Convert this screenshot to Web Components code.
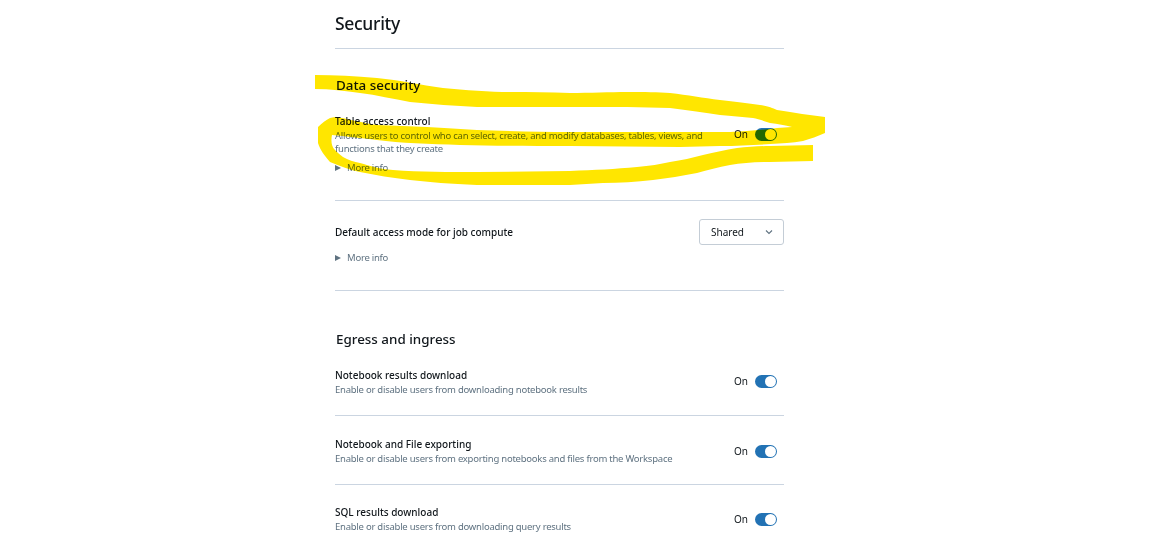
<!DOCTYPE html>
<html>
<head>
<meta charset="utf-8">
<title>Security</title>
<style>
    html, body { margin: 0; background: #fff; height: 537px; overflow: hidden; }
    body { font-family: "Noto Sans", "Liberation Sans", sans-serif; color: #1f2a37; }
</style>
</head>
<body>
<settings-page>
    <setting-section title="Data security" style="--top: 27px">
        <setting-row name="Table access control" style="--pad-top: 20px; --pad-bottom: 25px; --control-top: 13px; --more-top: 6px">
            <span slot="desc">Allows users to control who can select, create, and modify databases, tables, views, and functions that they create</span>
            <more-info slot="more"></more-info>
            <on-toggle slot="control"></on-toggle>
        </setting-row>
        <setting-row name="Default access mode for job compute" style="--pad-top: 24px; --pad-bottom: 25px; --control-top: -6px">
            <more-info slot="more"></more-info>
            <select-box slot="control" value="Shared"></select-box>
        </setting-row>
    </setting-section>
    <setting-section title="Egress and ingress" style="--top: 39px">
        <setting-row name="Notebook results download" plain style="--pad-top: 20px; --pad-bottom: 19px; --control-top: 6px">
            <span slot="desc">Enable or disable users from downloading notebook results</span>
            <on-toggle slot="control"></on-toggle>
        </setting-row>
        <setting-row name="Notebook and File exporting" plain style="--pad-top: 21px; --pad-bottom: 19px; --control-top: 7px">
            <span slot="desc">Enable or disable users from exporting notebooks and files from the Workspace</span>
            <on-toggle slot="control"></on-toggle>
        </setting-row>
        <setting-row name="SQL results download" plain style="--pad-top: 20px; --pad-bottom: 19px; --control-top: 7px">
            <span slot="desc">Enable or disable users from downloading query results</span>
            <on-toggle slot="control"></on-toggle>
        </setting-row>
    </setting-section>
</settings-page>

<script>
class SettingsPage extends HTMLElement {
    constructor() {
        super();
        this.attachShadow({ mode: 'open' });
        this.shadowRoot.innerHTML = `
            <style>
                :host { display: block; position: relative; height: 537px; overflow: hidden; background: #fff; }
                main { width: 449px; margin-left: 335px; }
                h1 {
                    margin: 0;
                    height: 48px;
                    line-height: 46px;
                    font-size: 17.5px;
                    letter-spacing: -0.3px;
                    font-weight: 500;
                    color: #11171c;
                    border-bottom: 1px solid #cbd5e1;
                }
                svg { position: absolute; left: 0; top: 0; mix-blend-mode: multiply; pointer-events: none; }
            </style>
            <main>
                <h1>Security</h1>
                <slot></slot>
            </main>
            <svg width="1160" height="537" viewBox="0 0 1160 537">
                <path fill="#ffe600" d="M315 75 C335 75 355 76 377 78 C400 80 420 85 443 88 C465 90 490 92 510 92 C530 92 550 92 570 93 C590 93 610 92 627 92 C645 92 658 92 670 93 C688 95 703 98 720 100 C735 102 748 103 760 105 C768 106 772 108 777 110 C795 113 810 115 825 117 L825 133 C818 136 810 139 803 141 C792 143 782 143 770 144 C755 145 738 146 720 146 L680 147 L570 146 C530 146 495 146 460 145 C430 144 400 143 377 140 C360 138 345 136 332 135 C331 140 331 146 335 150 C337 152 340 155 343 157 C348 160 354 162 360 163 C370 166 380 169 393 170 C420 172 450 172 477 172 L570 171 C595 170 615 169 637 167 C650 166 660 164 670 162 C682 160 692 158 703 155 C715 152 725 150 737 148 C748 147 760 146 770 146 L813 145 L813 161 L770 162 C755 162 742 163 730 165 C718 167 708 170 697 173 C682 176 668 178 653 180 C636 182 620 183 603 183 L570 185 L477 185 C450 184 430 182 410 180 C392 178 376 175 360 172 C350 170 340 166 330 162 C325 156 320 150 318 143 L318 127 C322 123 326 120 330 118 L335 117 C350 119 362 123 377 125 C395 126 410 126 427 127 C445 128 460 129 477 130 C510 131 540 132 570 132 L730 132 C745 131 762 130 777 128 L792 127 C785 125 778 124 770 123 C764 121 758 119 753 118 C742 117 732 116 720 115 C705 113 688 110 670 108 L627 107 L570 107 L477 107 C455 106 432 104 410 102 C393 99 377 95 360 93 C345 91 330 89 315 89 Z"/>
            </svg>
        `;
    }
}

class SettingSection extends HTMLElement {
    constructor() {
        super();
        this.attachShadow({ mode: 'open' });
    }

    connectedCallback() {
        this.shadowRoot.innerHTML = `
            <style>
                :host { display: block; }
                h2 {
                    margin: var(--top) 0 0;
                    padding-left: 1px;
                    height: 18px;
                    line-height: 18px;
                    font-size: 13.4px;
                    font-weight: 500;
                    color: #11171c;
                }
            </style>
            <h2>${this.getAttribute('title')}</h2>
            <slot></slot>
        `;
    }
}

class SettingRow extends HTMLElement {
    constructor() {
        super();
        this.attachShadow({ mode: 'open' });
    }

    connectedCallback() {
        this.shadowRoot.innerHTML = `
            <style>
                :host {
                    display: flex;
                    align-items: flex-start;
                    justify-content: space-between;
                    box-sizing: border-box;
                    padding: var(--pad-top) 0 var(--pad-bottom);
                    border-bottom: 1px solid #cbd5e1;
                }
                :host(:last-child[plain]) { border-bottom: 0; }
                .text { flex: 1; min-width: 0; max-width: 372px; }
                .name { font-size: 10px; line-height: 15px; font-weight: 500; color: #11171c; }
                .desc { font-size: 9.5px; letter-spacing: -0.24px; line-height: 13px; color: #5f7281; }
                ::slotted(more-info) { margin-top: var(--more-top, 11px); }
                .control { flex: none; display: flex; align-items: center; margin-top: var(--control-top, 0); }
            </style>
            <div class="text">
                <div class="name">${this.getAttribute('name')}</div>
                <div class="desc"><slot name="desc"></slot></div>
                <slot name="more"></slot>
            </div>
            <div class="control"><slot name="control"></slot></div>
        `;
    }
}

class MoreInfo extends HTMLElement {
    constructor() {
        super();
        this.attachShadow({ mode: 'open' });
        this.shadowRoot.innerHTML = `
            <style>
                :host { display: flex; align-items: center; gap: 6px; font-size: 9.5px; letter-spacing: -0.24px; line-height: 14px; color: #5f7281; }
                i { width: 0; height: 0; border-left: 6px solid #5f7281; border-top: 3.5px solid transparent; border-bottom: 3.5px solid transparent; }
            </style>
            <i></i><span>More info</span>
        `;
    }
}

class OnToggle extends HTMLElement {
    constructor() {
        super();
        this.attachShadow({ mode: 'open' });
        this.shadowRoot.innerHTML = `
            <style>
                :host { display: flex; align-items: center; gap: 7px; margin-right: 7px; font-size: 10px; line-height: 14px; color: #11171c; }
                .track { display: flex; justify-content: flex-end; align-items: center; box-sizing: border-box; width: 22px; height: 13px; padding-right: 1px; border-radius: 7px; background: #2272b4; }
                .knob { width: 11px; height: 11px; border-radius: 50%; background: #fff; }
            </style>
            <span>On</span>
            <div class="track"><div class="knob"></div></div>
        `;
    }
}

class SelectBox extends HTMLElement {
    constructor() {
        super();
        this.attachShadow({ mode: 'open' });
    }

    connectedCallback() {
        this.shadowRoot.innerHTML = `
            <style>
                :host {
                    display: flex;
                    align-items: center;
                    justify-content: space-between;
                    box-sizing: border-box;
                    width: 85px;
                    height: 26px;
                    padding: 0 10px 0 11px;
                    border: 1px solid #c4cdd6;
                    border-radius: 3px;
                    font-size: 10px;
                    color: #11171c;
                }
                svg { display: block; }
            </style>
            <span>${this.getAttribute('value')}</span>
            <svg width="8" height="6" viewBox="0 0 8 6" fill="none"><path d="M1 1.5 L4 4.5 L7 1.5" stroke="#5f7281" stroke-width="1.1"/></svg>
        `;
    }
}

customElements.define('settings-page', SettingsPage);
customElements.define('setting-section', SettingSection);
customElements.define('setting-row', SettingRow);
customElements.define('more-info', MoreInfo);
customElements.define('on-toggle', OnToggle);
customElements.define('select-box', SelectBox);
</script>
</body>
</html>
